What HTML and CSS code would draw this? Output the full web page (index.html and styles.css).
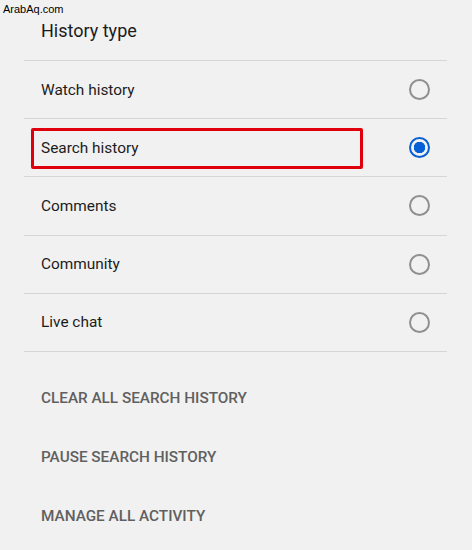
FILE: index.html
```html
<!DOCTYPE html>
<html lang="en">
<head>
  <meta charset="UTF-8">
  <meta name="viewport" content="width=device-width, initial-scale=1.0">
  <title>History type</title>
  <link rel="stylesheet" href="styles.css">
</head>
<body>
  <span class="watermark">ArabAq.com</span>
  <main>
    <h1 class="title">History type</h1>

    <ul class="typeList">
      <li class="typeRow">
        <span>Watch history</span>
        <span class="radio"></span>
      </li>
      <li class="typeRow">
        <span>Search history</span>
        <span class="radio checked"></span>
        <span class="highlight"></span>
      </li>
      <li class="typeRow">
        <span>Comments</span>
        <span class="radio"></span>
      </li>
      <li class="typeRow">
        <span>Community</span>
        <span class="radio"></span>
      </li>
      <li class="typeRow">
        <span>Live chat</span>
        <span class="radio"></span>
      </li>
    </ul>

    <div class="actions">
      <button class="action">Clear all search history</button>
      <button class="action">Pause search history</button>
      <button class="action">Manage all activity</button>
    </div>
  </main>
</body>
</html>
```

FILE: styles.css
```css
body {
  margin: 0;
  background-color: #f1f1f1;
  font-family: Roboto, Arial, sans-serif;
  color: #1c1c1c;
  position: relative;
}

.watermark {
  position: absolute;
  left: 3px;
  top: 3px;
  font-family: "Liberation Sans", Arial, sans-serif;
  font-size: 11px;
  color: #000;
}

main {
  padding: 0 25px 0 24px;
}

.title {
  margin: 0;
  height: 61px;
  line-height: 62px;
  padding-left: 17px;
  font-size: 18px;
  font-weight: 400;
  border-bottom: 1px solid #d6d6d6;
  box-sizing: border-box;
}

.typeList {
  list-style: none;
  margin: 0;
  padding: 0;
}

.typeRow {
  position: relative;
  display: flex;
  align-items: center;
  justify-content: space-between;
  height: 57.2px;
  padding: 0 17px;
  font-size: 15.4px;
  border-bottom: 1px solid #d6d6d6;
}

.radio {
  width: 17px;
  height: 17px;
  border: 2px solid #8f8f8f;
  border-radius: 50%;
  box-sizing: content-box;
}

.radio.checked {
  border-color: #065fd4;
  background: radial-gradient(circle, #065fd4 0 5.5px, transparent 6px);
}

.highlight {
  position: absolute;
  left: 7px;
  top: 9px;
  width: 332px;
  height: 41px;
  border: 3px solid #e0000b;
  border-radius: 2px;
  box-sizing: border-box;
}

.actions {
  padding-top: 17px;
}

.action {
  display: block;
  height: 59px;
  padding: 0 0 0 17px;
  border: none;
  background: none;
  font-family: Roboto, Arial, sans-serif;
  font-size: 15.3px;
  font-weight: 500;
  text-transform: uppercase;
  color: #606060;
  cursor: pointer;
}
```
